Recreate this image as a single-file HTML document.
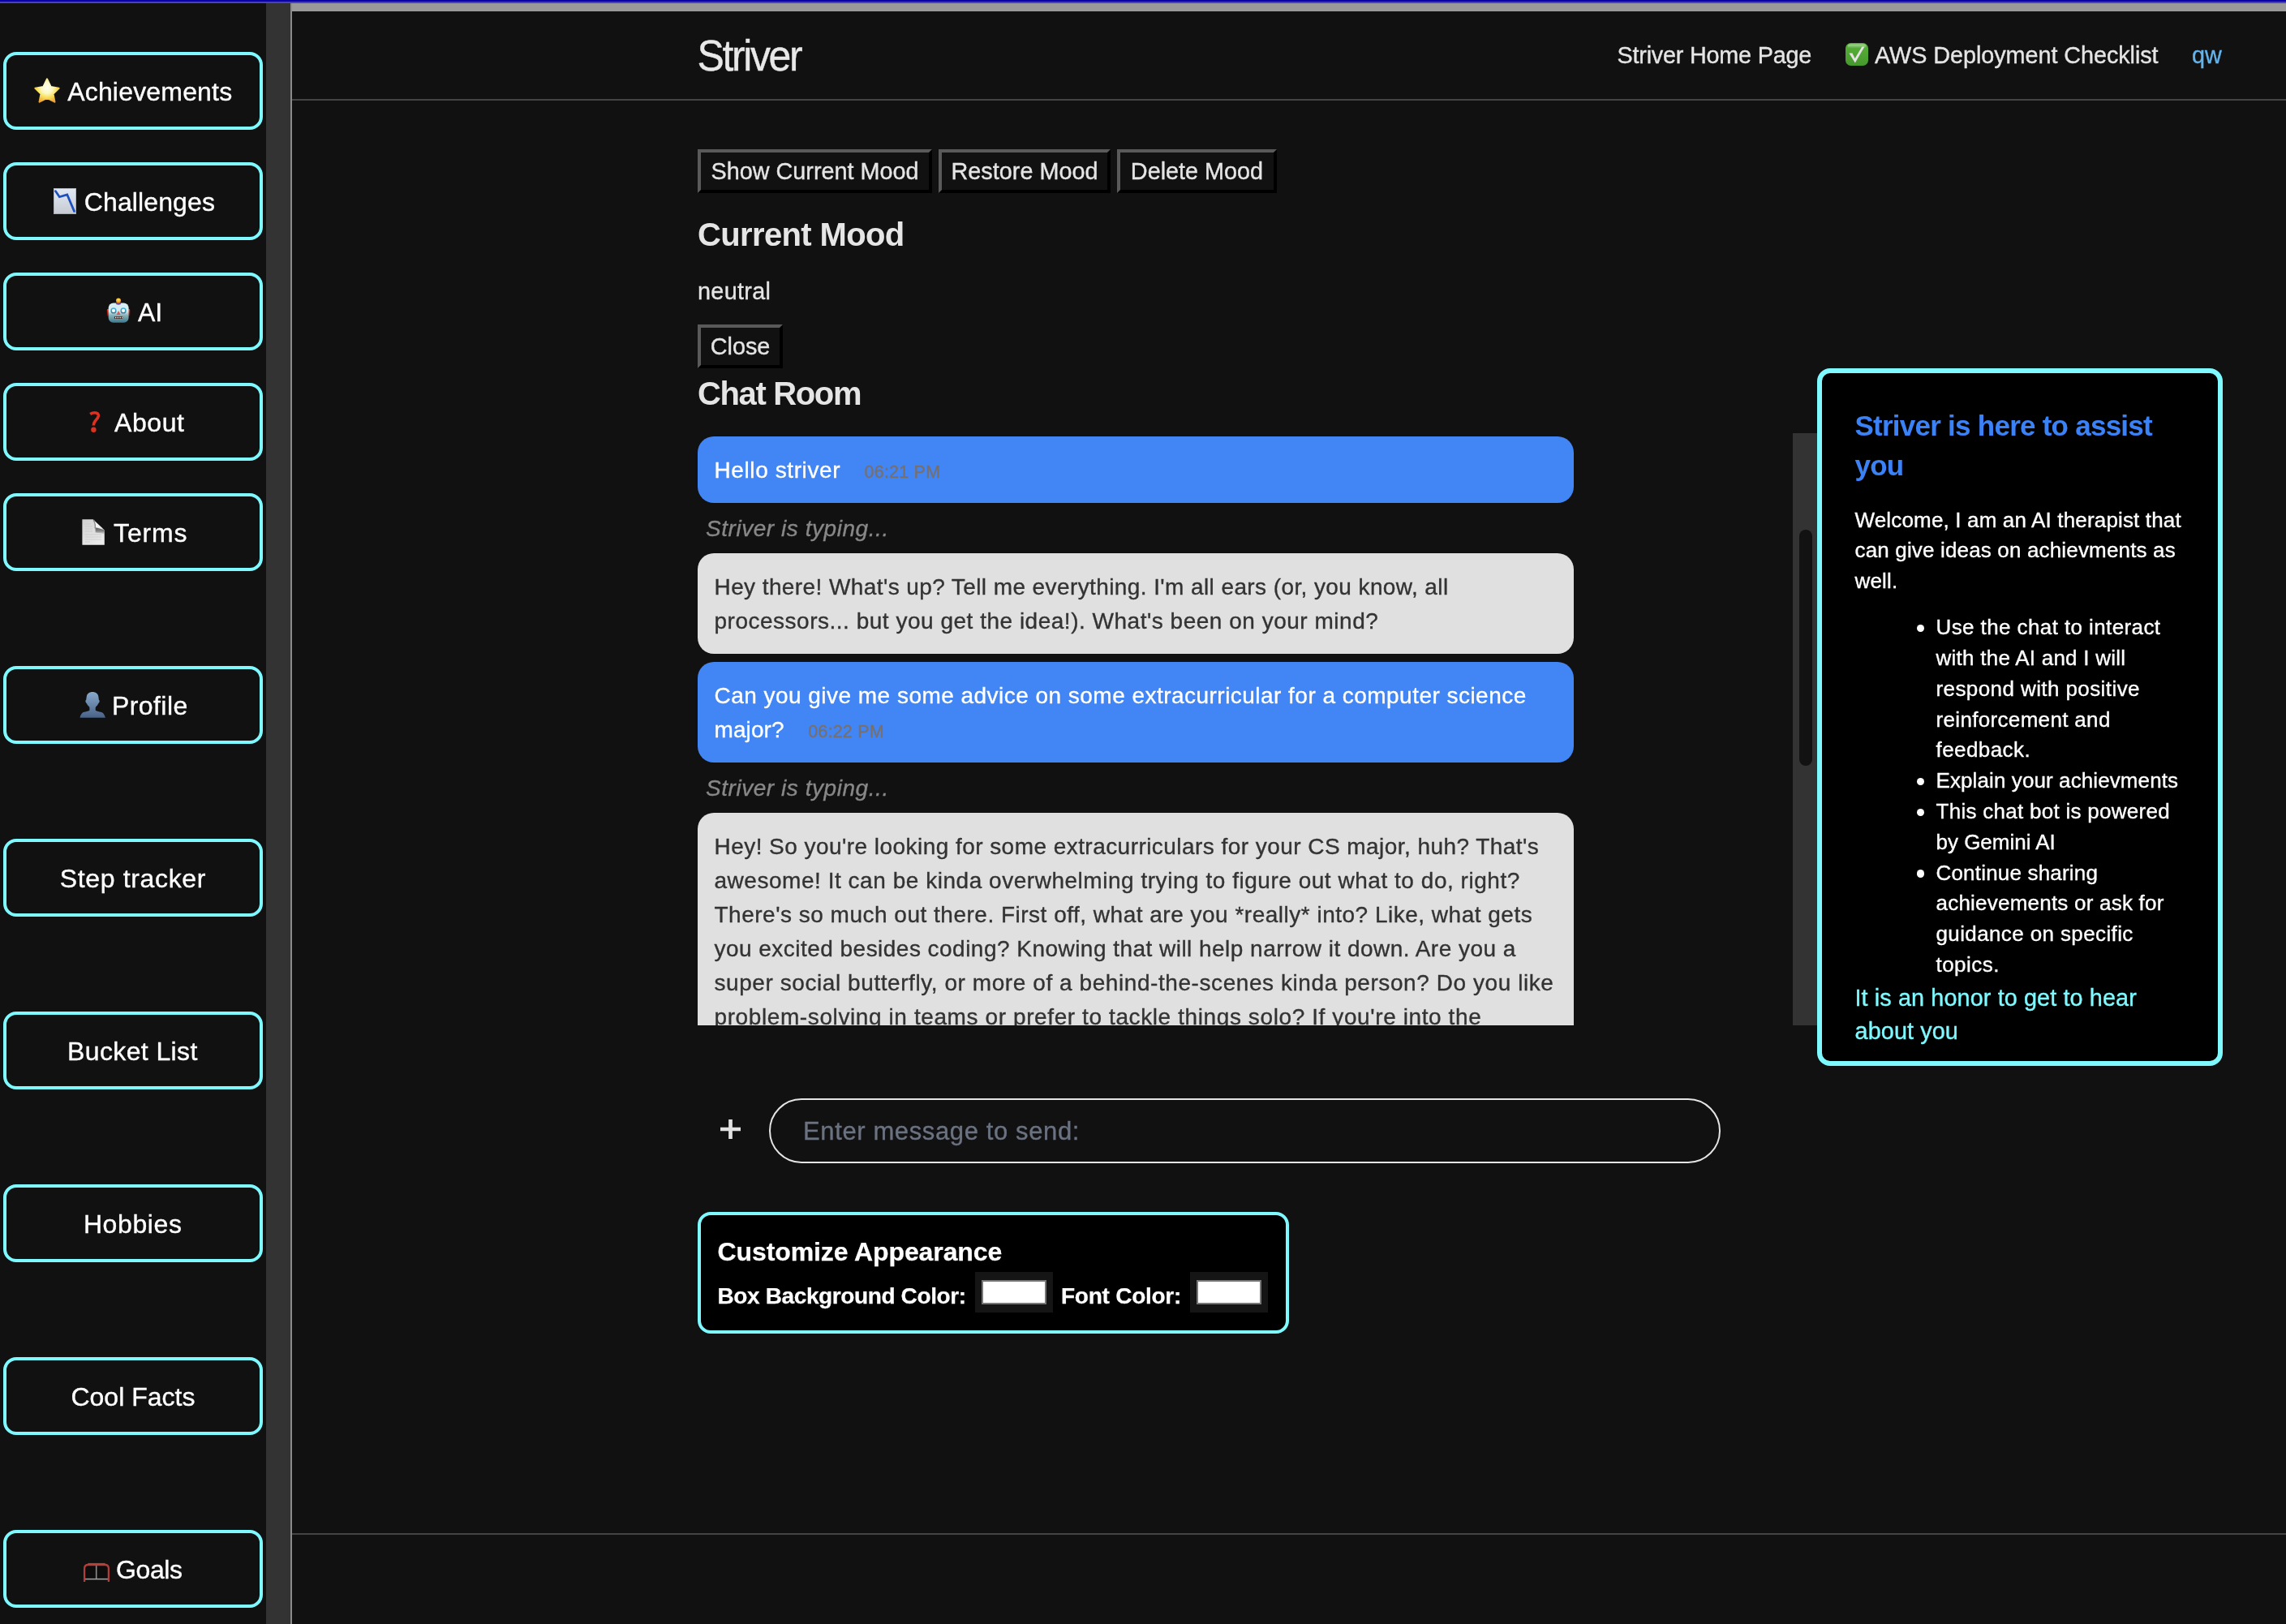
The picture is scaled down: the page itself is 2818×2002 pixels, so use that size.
<!DOCTYPE html>
<html>
<head>
<meta charset="utf-8">
<title>Striver</title>
<style>
*{box-sizing:border-box;margin:0;padding:0}
html,body{width:2818px;height:2002px;overflow:hidden;background:#111111;}
body{font-family:"Liberation Sans",sans-serif;color:#e5e5e5;position:relative;-webkit-text-stroke:.35px currentColor;}
#root{position:absolute;left:0;top:0;width:2818px;height:2002px;will-change:transform}
.abs{position:absolute}
.nw{white-space:nowrap}
/* top chrome */
#topbar1{left:0;top:0;width:2818px;height:2px;background:#0900a6}
#topbar2{left:0;top:2px;width:2818px;height:2px;background:#4a40c8}
#sbtrack{left:328px;top:4px;width:30px;height:1998px;background:#333333}
#sbline{left:358px;top:4px;width:2px;height:1998px;background:#8a8a8a}
#graybar{left:360px;top:4px;width:2458px;height:10px;background:#999999}
#hdrline{left:360px;top:122px;width:2458px;height:2px;background:#444444}
#ftrline{left:360px;top:1890px;width:2458px;height:2px;background:#444444}
/* sidebar */
.sbtn{position:absolute;left:4px;width:320px;height:96px;border:4px solid #7df9ff;border-radius:16px;background:#111111;color:#ffffff;font-size:32px;line-height:90px;white-space:nowrap}
.sbtn span{position:absolute;top:0}
.emo{position:absolute;display:block;overflow:visible}
/* header */
#logo{left:859.5px;top:38.4px;font-size:50px;line-height:64px;letter-spacing:-2.4px;color:#e8e8e8;transform:scale(1,1.07);transform-origin:0 49.3px}
.nav{font-size:28.8px;line-height:40px;color:#e5e5e5;top:47.5px}
/* buttons */
.btn{position:absolute;height:54px;border:4px solid;border-color:#5a5a5a #000 #000 #5a5a5a;background:#111;color:#e5e5e5;font-size:28.8px;line-height:46px;text-align:center;white-space:nowrap;letter-spacing:0}
h2,h3{-webkit-text-stroke:0}
.t1,.t2{-webkit-text-stroke:.25px currentColor}
h2{position:absolute;font-size:40px;line-height:48px;font-weight:700;color:#e5e5e5;white-space:nowrap}
/* chat */
#chat{left:860px;top:534px;width:1380px;height:730px;overflow:hidden}
#track{left:2210px;top:534px;width:30px;height:730px;background:#333333}
#thumb{left:2218px;top:653px;width:16px;height:291px;border-radius:8px;background:#121212}
.msg{position:absolute;left:0;width:1080px;border-radius:20px;padding:21px 20.5px 19px;font-size:28px;line-height:42px;white-space:nowrap;letter-spacing:.45px}
.user{background:#4285f4;color:#ffffff}
.bot{background:#e0e0e0;color:#333333}
.ts{font-size:21.5px;color:#77706c;margin-left:29.5px;letter-spacing:.2px}
.typing{position:absolute;left:10px;margin-top:1px;font-size:28px;line-height:42px;font-style:italic;color:#888888;white-space:nowrap;letter-spacing:.55px}
/* input */
#plus{left:888px;top:1380px;width:25px;height:24px}
#inp{left:948px;top:1354px;width:1173px;height:80px;border:2px solid #e5e5e5;border-radius:40px;background:#111}
#ph{left:990px;top:1373px;font-size:31px;line-height:44px;color:#6b7280;letter-spacing:.62px}
/* customize */
#cust{left:860px;top:1494px;width:729px;height:150px;border:4px solid #7df9ff;border-radius:16px;background:#000}
#cust .t1{left:20.5px;top:22.5px;font-size:32px;line-height:44px;font-weight:700;color:#fff;letter-spacing:-.1px}
#cust .t2{top:79.8px;font-size:28px;line-height:40px;font-weight:700;color:#fff;letter-spacing:-.38px}
.cin{position:absolute;top:70px;width:96px;height:50px;background:#151515}
.cin i{position:absolute;left:8px;top:10px;width:80px;height:30px;background:#fff;border:2px solid #777}
/* panel */
#panel{left:2240px;top:454px;width:500px;height:860px;border:6px solid #7df9ff;border-radius:16px;background:#000;color:#fff}
#panel h3{position:absolute;left:40.5px;top:40px;font-size:35px;line-height:49.2px;font-weight:700;color:#3b82f6;white-space:nowrap;letter-spacing:-.75px}
#panel .p{position:absolute;left:40.5px;top:163px;font-size:26px;line-height:37.4px;white-space:nowrap;letter-spacing:.16px}
#panel .li{position:absolute;left:140.5px;font-size:26px;line-height:37.8px;white-space:nowrap;letter-spacing:.16px}
#panel .dot{position:absolute;left:116.5px;width:9.5px;height:9.5px;border-radius:50%;background:#fff}
#panel .f{position:absolute;left:40.5px;top:749.7px;font-size:28.8px;line-height:41.2px;color:#7df9ff;white-space:nowrap;letter-spacing:.11px}
</style>
</head>
<body>
<div id="root">
<div class="abs" id="topbar1"></div><div class="abs" id="topbar2"></div>
<div class="abs" id="sbtrack"></div><div class="abs" id="sbline"></div>
<div class="abs" id="graybar"></div><div class="abs" id="hdrline"></div><div class="abs" id="ftrline"></div>

<!-- SIDEBAR -->
<div class="sbtn" style="top:64px"><span style="left:75.2px;letter-spacing:0.18px">Achievements</span></div>
<div class="sbtn" style="top:200px"><span style="left:95.8px;letter-spacing:0.11px">Challenges</span></div>
<div class="sbtn" style="top:336px"><span style="left:162.1px;letter-spacing:-0.1px">AI</span></div>
<div class="sbtn" style="top:472px"><span style="left:133.0px;letter-spacing:0.58px">About</span></div>
<div class="sbtn" style="top:608px"><span style="left:132.1px;letter-spacing:0.85px">Terms</span></div>
<div class="sbtn" style="top:821px"><span style="left:130.0px;letter-spacing:0.42px">Profile</span></div>
<div class="sbtn" style="top:1034px"><span style="left:65.7px;letter-spacing:0.66px">Step tracker</span></div>
<div class="sbtn" style="top:1247px"><span style="left:75.0px;letter-spacing:0.38px">Bucket List</span></div>
<div class="sbtn" style="top:1460px"><span style="left:94.9px;letter-spacing:0.6px">Hobbies</span></div>
<div class="sbtn" style="top:1673px"><span style="left:79.4px;letter-spacing:0.02px">Cool Facts</span></div>
<div class="sbtn" style="top:1886px"><span style="left:135.0px;letter-spacing:-0.38px">Goals</span></div>
<!-- EMOJI -->
<svg class="emo" style="left:42px;top:96px" width="32" height="31" viewBox="0 0 32 31"><defs><radialGradient id="sg" gradientUnits="userSpaceOnUse" cx="16" cy="12" r="19"><stop offset="0" stop-color="#fffff2"/><stop offset=".38" stop-color="#fdf8c0"/><stop offset=".62" stop-color="#f7e262"/><stop offset="1" stop-color="#f0a030"/></radialGradient></defs><path d="M16 1.4 L20.5 11 L30.6 12.8 L23.4 19.7 L25.4 29.6 L16 24.8 L6.6 29.6 L8.6 19.7 L1.4 12.8 L11.5 11 Z" fill="url(#sg)" stroke="url(#sg)" stroke-width="2.2" stroke-linejoin="round"/></svg>
<svg class="emo" style="left:66px;top:232px" width="28" height="32" viewBox="0 0 28 32"><defs><linearGradient id="cg" x1="0" y1="0" x2="0" y2="1"><stop offset="0" stop-color="#e2e9f3"/><stop offset="1" stop-color="#c6cad2"/></linearGradient></defs><rect width="28" height="32" fill="url(#cg)"/><rect x=".5" y=".5" width="27" height="31" fill="none" stroke="#8f959d" stroke-opacity=".55"/><path d="M2.4 3.6 L7.3 10.8 L16.8 8 L25.5 28.4" stroke="#1c4fc0" stroke-width="2.7" fill="none" stroke-linecap="round"/></svg>
<svg class="emo" style="left:131px;top:367px" width="30" height="31" viewBox="0 0 30 31"><defs><linearGradient id="rh" x1="0" y1="0" x2="0" y2="1"><stop offset="0" stop-color="#d6eff2"/><stop offset=".42" stop-color="#d3edf0"/><stop offset=".62" stop-color="#8db3ba"/><stop offset="1" stop-color="#3b788c"/></linearGradient><linearGradient id="re" x1="0" y1="0" x2="0" y2="1"><stop offset="0" stop-color="#f03a28"/><stop offset="1" stop-color="#6a0c06"/></linearGradient><radialGradient id="ra" cx="50%" cy="35%" r="65%"><stop offset="0" stop-color="#fff050"/><stop offset="1" stop-color="#e88420"/></radialGradient><linearGradient id="ry" x1="0" y1="0" x2="0" y2="1"><stop offset="0" stop-color="#44bce4"/><stop offset="1" stop-color="#3a7696"/></linearGradient></defs><rect x=".9" y="14" width="3" height="8.8" rx="1" fill="url(#re)"/><rect x="26.2" y="14" width="3" height="8.8" rx="1" fill="url(#re)"/><rect x="2.7" y="6.6" width="24.9" height="24.2" rx="6" fill="url(#rh)"/><ellipse cx="15" cy="7" rx="3.1" ry="1.7" fill="#6e4a9e"/><circle cx="15" cy="3.4" r="3" fill="url(#ra)"/><circle cx="9" cy="15.9" r="3.6" fill="url(#ry)"/><circle cx="21.1" cy="15.9" r="3.6" fill="url(#ry)"/><circle cx="9" cy="15.9" r="2.1" fill="#fff"/><circle cx="21.1" cy="15.9" r="2.1" fill="#fff"/><path d="M15.1 16 L17.5 20.9 H12.7 Z" fill="#e05555"/><rect x="9.9" y="23.1" width="10.4" height="2.9" rx="1" fill="#3a2c28"/><path d="M11 24.6h1.4M13.7 24.6h1.4M16.4 24.6h1.4M19 24.6h.8" stroke="#fff" stroke-width="1.5"/></svg>
<svg class="emo" style="left:110px;top:507px" width="14" height="27" viewBox="0 0 14 27"><path d="M1.2 3.5 C3 2.3 5 1.8 6.9 1.8 C10 1.8 11.5 3.5 11.3 5.7 C11 8.3 8.7 10.2 7.1 12.4 C5.9 14 5.4 15.4 5.3 17.5" stroke="#df3020" stroke-width="3.6" fill="none"/><circle cx="5.4" cy="22.7" r="3.2" fill="#df3020"/></svg>
<svg class="emo" style="left:101px;top:640px" width="28" height="32" viewBox="0 0 28 32"><defs><linearGradient id="pg" x1="0" y1="0" x2=".6" y2="1"><stop offset="0" stop-color="#cfcfcf"/><stop offset="1" stop-color="#ebebeb"/></linearGradient><linearGradient id="ps" x1="0" y1="0" x2="0" y2="1"><stop offset="0" stop-color="#585858"/><stop offset=".55" stop-color="#707070" stop-opacity=".8"/><stop offset="1" stop-color="#909090" stop-opacity="0"/></linearGradient></defs><path d="M.4 .2 H13.6 L27.8 13.6 V31.8 H.4 Z" fill="url(#pg)"/><path d="M4 6h7M4 9h9M4 12h9M4 15h9M4 19h20M4 22h20M4 25h20M4 28h6" stroke="#c8c8c8" stroke-opacity=".7" stroke-width="1.2"/><path d="M16.4 10 L27.8 13.2 V19 C24 17.2 20 16.6 16.7 16.8 Z" fill="url(#ps)"/><path d="M14.3 1 C16.2 4 16.8 7.6 16.2 11.4" stroke="#8c8c8c" stroke-width="1.6" fill="none"/><path d="M15.6 2.2 L25.4 11.4 C22.6 10.5 19.8 10.2 17 10.4 C17.3 7.6 16.8 4.8 15.6 2.2 Z" fill="#f2f2f2"/></svg>
<svg class="emo" style="left:98px;top:852px" width="32" height="33" viewBox="0 0 32 33"><defs><linearGradient id="bg" gradientUnits="userSpaceOnUse" x1="0" y1="0" x2="0" y2="33"><stop offset="0" stop-color="#8aaccf"/><stop offset="1" stop-color="#486286"/></linearGradient></defs><path fill="url(#bg)" d="M16.05 .9 C20 .9 22.6 3 23.2 6 C23.6 8 23.8 9.6 23.8 10.6 C24.6 11 24.9 12.4 24.5 13.4 C24.2 14.2 23.6 14.6 23.2 15.2 C22.6 16.8 21.8 17.8 20.9 18.5 C20.2 19.2 19.8 19.8 19.7 20.6 V23.2 C20 24.2 21 24.5 22 24.7 C24 25.2 25.6 25.6 27 26 C29 26.8 29.6 27.6 30 28.4 C31 29.8 31.6 31.2 31.9 32.8 H.5 C.7 31.2 1.2 29.8 2.2 28.4 C2.8 27.6 3.4 26.8 4.8 26 C6.2 25.6 8 25.2 10 24.7 C11 24.5 12.1 24.2 12.4 23.2 V20.6 C12.3 19.8 11.9 19.2 11.3 18.5 C10.4 17.8 9.5 16.8 8.9 15.2 C8.5 14.6 7.9 14.2 7.6 13.4 C7.2 12.4 7.5 11 8.3 10.6 C8.3 9.6 8.5 8 8.9 6 C9.5 3 12.1 .9 16.05 .9 Z"/></svg>
<svg class="emo" style="left:102px;top:1926px" width="34" height="25" viewBox="0 0 34 25"><rect x="3" y="4" width="28" height="17" fill="#0d0d0d"/><path d="M16.7 4 V20.5" stroke="#8c8c8c" stroke-width="1.6"/><path d="M3 20.6 H31" stroke="#a4a4a4" stroke-width="1.5"/><path d="M2.1 24 V7.5 Q2.1 3 6.6 3 H27.4 Q31.9 3 31.9 7.5 V24" stroke="#b03f39" stroke-width="2.3" fill="none"/><path d="M6.4 2.3 H27.6" stroke="#b5413b" stroke-width="2.8"/></svg>
<svg class="emo" style="left:2275px;top:53px" width="28" height="28" viewBox="0 0 28 28"><defs><linearGradient id="kg" x1="0" y1="0" x2="0" y2="1"><stop offset="0" stop-color="#58b23a"/><stop offset="1" stop-color="#46982d"/></linearGradient><linearGradient id="kl" x1="0" y1="0" x2="0" y2="1"><stop offset="0" stop-color="#fff" stop-opacity=".5"/><stop offset="1" stop-color="#fff" stop-opacity="0"/></linearGradient></defs><rect width="28" height="28" rx="6.5" fill="url(#kg)"/><rect x="2.6" y="1.6" width="22.8" height="5" rx="3" fill="url(#kl)"/><path d="M4.4 12.6 H8.4 L11.6 18.9 L20.3 4.6 H23.5 L11.8 24.4 Z" fill="#e6e2e6"/></svg>
<!-- /EMOJI -->

<!-- HEADER -->
<div class="abs nw" id="logo">Striver</div>
<div class="abs nw nav" style="left:1993.5px;letter-spacing:-.22px">Striver Home Page</div>
<div class="abs nw nav" style="left:2311px;letter-spacing:-.06px">AWS Deployment Checklist</div>
<div class="abs nw nav" style="left:2702px;color:#63b3ed">qw</div>

<!-- MOOD -->
<div class="btn" style="left:860px;top:184px;width:289px">Show Current Mood</div>
<div class="btn" style="left:1157px;top:184px;width:212px">Restore Mood</div>
<div class="btn" style="left:1377px;top:184px;width:197px">Delete Mood</div>
<h2 style="left:860px;top:265px;letter-spacing:-.63px">Current Mood</h2>
<div class="abs nw" style="left:860px;top:338px;font-size:28.8px;line-height:42px;letter-spacing:.3px">neutral</div>
<div class="btn" style="left:860px;top:400px;width:105px">Close</div>
<h2 style="left:860px;top:461px;letter-spacing:-1.35px">Chat Room</h2>

<!-- CHAT -->
<div class="abs" id="chat">
  <div class="msg user" style="top:4px;height:82px;letter-spacing:.6px">Hello striver<span class="ts">06:21 PM</span></div>
  <div class="typing" style="top:96px">Striver is typing...</div>
  <div class="msg bot" style="top:148px;height:124px"><span style="letter-spacing:0.405px">Hey there! What's up? Tell me everything. I'm all ears (or, you know, all</span><br><span style="letter-spacing:0.51px">processors... but you get the idea!). What's been on your mind?</span></div>
  <div class="msg user" style="top:282px;height:124px"><span style="letter-spacing:0.47px">Can you give me some advice on some extracurricular for a computer science</span><br><span style="letter-spacing:.1px">major?</span><span class="ts">06:22 PM</span></div>
  <div class="typing" style="top:416px">Striver is typing...</div>
  <div class="msg bot" style="top:468px;height:400px;border-bottom-left-radius:0;border-bottom-right-radius:0"><span style="letter-spacing:0.45px">Hey! So you're looking for some extracurriculars for your CS major, huh? That's</span><br><span style="letter-spacing:0.53px">awesome! It can be kinda overwhelming trying to figure out what to do, right?</span><br><span style="letter-spacing:0.5px">There's so much out there. First off, what are you *really* into? Like, what gets</span><br><span style="letter-spacing:0.47px">you excited besides coding? Knowing that will help narrow it down. Are you a</span><br><span style="letter-spacing:0.57px">super social butterfly, or more of a behind-the-scenes kinda person? Do you like</span><br><span style="letter-spacing:0.6px">problem-solving in teams or prefer to tackle things solo? If you're into the</span><br>&nbsp;</div>
</div>
<div class="abs" id="track"></div><div class="abs" id="thumb"></div>

<!-- INPUT -->
<svg class="abs" id="plus" viewBox="0 0 25 24"><path d="M12.5 0v24M0 12h25" stroke="#e2e2e2" stroke-width="4.7" fill="none"/></svg>
<div class="abs" id="inp"></div>
<div class="abs nw" id="ph">Enter message to send:</div>

<!-- CUSTOMIZE -->
<div class="abs" id="cust">
  <div class="abs nw t1">Customize Appearance</div>
  <div class="abs nw t2" style="left:20.5px">Box Background Color:</div>
  <div class="cin" style="left:338px"><i></i></div>
  <div class="abs nw t2" style="left:444px;letter-spacing:-.25px">Font Color:</div>
  <div class="cin" style="left:603px"><i></i></div>
</div>

<!-- PANEL -->
<div class="abs" id="panel">
  <h3>Striver is here to assist<br>you</h3>
  <div class="p">Welcome, I am an AI therapist that<br>can give ideas on achievments as<br>well.</div>
  <div class="li" style="top:295.3px"><span style="letter-spacing:0.40px">Use the chat to interact</span><br><span style="letter-spacing:0.25px">with the AI and I will</span><br><span style="letter-spacing:0.41px">respond with positive</span><br><span style="letter-spacing:0.33px">reinforcement and</span><br><span style="letter-spacing:0.42px">feedback.</span><br><span style="letter-spacing:0.10px">Explain your achievments</span><br><span style="letter-spacing:0.28px">This chat bot is powered</span><br><span style="letter-spacing:-0.01px">by Gemini AI</span><br><span style="letter-spacing:0.19px">Continue sharing</span><br><span style="letter-spacing:0.22px">achievements or ask for</span><br><span style="letter-spacing:0.38px">guidance on specific</span><br><span style="letter-spacing:0.46px">topics.</span></div>
  <div class="dot" style="top:309.5px"></div>
  <div class="dot" style="top:498.5px"></div>
  <div class="dot" style="top:536.5px"></div>
  <div class="dot" style="top:612px"></div>
  <div class="f">It is an honor to get to hear<br>about you</div>
</div>
</div>
</body>
</html>
